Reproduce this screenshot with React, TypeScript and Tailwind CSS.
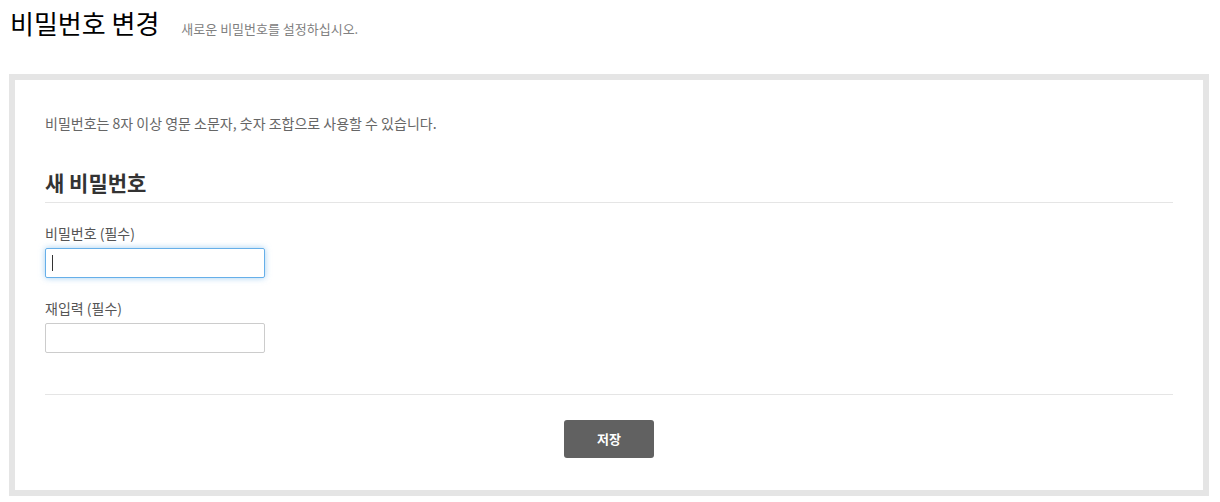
export default function App() {
  const font = { fontFamily: '"Noto Sans CJK KR", "Noto Sans", sans-serif' };

  return (
    <div className="bg-white min-h-[502px] w-[1220px]" style={font}>
      <div className="flex items-baseline h-[74px] pl-[10px] pt-[5px]">
        <h1 className="text-[26px] leading-[36px] text-black font-normal">비밀번호 변경</h1>
        <span className="ml-[22px] text-[13px] text-[#808080]">새로운 비밀번호를 설정하십시오.</span>
      </div>

      <div className="ml-[9px] w-[1200px] border-[6px] border-[#e5e5e5] bg-white px-[30px] pt-[33px] pb-[32px]">
        <p className="text-[14px] leading-[20px] text-[#666]">
          비밀번호는 8자 이상 영문 소문자, 숫자 조합으로 사용할 수 있습니다.
        </p>

        <h2 className="mt-[35px] text-[21px] leading-[28px] font-bold text-[#333] pb-[6px] border-b border-[#e5e5e5]">
          새 비밀번호
        </h2>

        <Field label="비밀번호 (필수)" focused className="mt-[20px]" />
        <Field label="재입력 (필수)" className="mt-[20px]" />

        <div className="mt-[41px] border-t border-[#e5e5e5]" />

        <div className="flex justify-center pt-[25px]">
          <button className="w-[90px] h-[38px] rounded-[3px] bg-[#616161] text-white text-[13px] font-bold">
            저장
          </button>
        </div>
      </div>
    </div>
  );
}

function Field({ label, focused, className }: { label: string; focused?: boolean; className?: string }) {
  return (
    <div className={className}>
      <label className="block text-[14px] leading-[20px] text-[#555]">{label}</label>
      <div className="relative mt-[5px] w-[220px] h-[30px]">
        <input
          type="password"
          className={
            focused
              ? "w-full h-full rounded-[2px] border border-[#66afe9] outline-none shadow-[0_0_6px_rgba(102,175,233,0.6)] px-[6px]"
              : "w-full h-full rounded-[2px] border border-[#ccc] outline-none px-[6px]"
          }
        />
        {focused && <span className="absolute left-[7px] top-[7px] w-px h-[16px] bg-[#333]" />}
      </div>
    </div>
  );
}
